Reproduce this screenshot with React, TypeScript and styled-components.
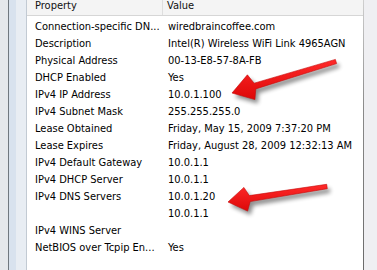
import React from "react";
import styled, { createGlobalStyle } from "styled-components";

const Global = createGlobalStyle`
  html, body { margin: 0; padding: 0; background: #ffffff; }
  body { width: 377px; height: 270px; overflow: hidden; }
`;

const Window = styled.div`
  position: relative;
  width: 377px;
  height: 270px;
  display: flex;
  overflow: hidden;
  font-family: "DejaVu Sans Condensed", "DejaVu Sans", sans-serif;
  font-size: 11px;
  color: #000;
`;

const LeftEdge = styled.div`
  display: flex;
  flex: none;
  height: 100%;
`;

const Strip = styled.div<{ $w: number; $bg: string }>`
  width: ${(p) => p.$w}px;
  background: ${(p) => p.$bg};
  flex: none;
`;

const ListView = styled.div`
  flex: 1;
  display: flex;
  flex-direction: column;
  background: #fff;
`;

const Header = styled.div`
  display: grid;
  grid-template-columns: 136px 1fr;
  height: 15px;
  background: #f4f4f4;
  border-bottom: 1px solid #d6d6d6;
  margin-bottom: 2px;
`;

const HeaderCell = styled.div<{ $pad: number; $divider?: boolean }>`
  padding-left: ${(p) => p.$pad}px;
  line-height: 12px;
  border-right: ${(p) => (p.$divider ? "1px solid #dedede" : "none")};
  color: #111;
`;

const Row = styled.div`
  display: grid;
  grid-template-columns: 137px 1fr;
  height: 17px;
  align-items: center;
  white-space: nowrap;
`;

const PropCell = styled.div`
  padding-left: 8px;
  overflow: hidden;
`;

const ValueCell = styled.div`
  padding-left: 4px;
`;

const RightEdge = styled.div`
  flex: none;
  width: 14px;
  display: flex;
  background: #efeff2;
`;

const RightLine = styled.div`
  width: 1px;
  background: linear-gradient(#cfcfcf, #8a8a8a 40%, #6a6a6a);
`;

const Overlay = styled.svg`
  position: absolute;
  left: 0;
  top: 0;
  pointer-events: none;
`;

const rows: [string, string][] = [
  ["Connection-specific DN...", "wiredbraincoffee.com"],
  ["Description", "Intel(R) Wireless WiFi Link 4965AGN"],
  ["Physical Address", "00-13-E8-57-8A-FB"],
  ["DHCP Enabled", "Yes"],
  ["IPv4 IP Address", "10.0.1.100"],
  ["IPv4 Subnet Mask", "255.255.255.0"],
  ["Lease Obtained", "Friday, May 15, 2009 7:37:20 PM"],
  ["Lease Expires", "Friday, August 28, 2009 12:32:13 AM"],
  ["IPv4 Default Gateway", "10.0.1.1"],
  ["IPv4 DHCP Server", "10.0.1.1"],
  ["IPv4 DNS Servers", "10.0.1.20"],
  ["", "10.0.1.1"],
  ["IPv4 WINS Server", ""],
  ["NetBIOS over Tcpip En...", "Yes"],
];

function arrowPoints(
  tip: [number, number],
  tail: [number, number],
  headLen: number,
  headHalf: number,
  shaftHead: number,
  shaftTail: number
): string {
  const dx = tail[0] - tip[0];
  const dy = tail[1] - tip[1];
  const len = Math.hypot(dx, dy);
  const ux = dx / len;
  const uy = dy / len;
  const nx = -uy;
  const ny = ux;
  const bx = tip[0] + ux * headLen;
  const by = tip[1] + uy * headLen;
  const pts: [number, number][] = [
    tip,
    [bx + nx * headHalf - ux * 4, by + ny * headHalf - uy * 4],
    [bx + nx * shaftHead, by + ny * shaftHead],
    [tail[0] + nx * shaftTail, tail[1] + ny * shaftTail],
    [tail[0] - nx * shaftTail, tail[1] - ny * shaftTail],
    [bx - nx * shaftHead, by - ny * shaftHead],
    [bx - nx * headHalf - ux * 4, by - ny * headHalf - uy * 4],
  ];
  return pts.map((p) => `${p[0].toFixed(1)},${p[1].toFixed(1)}`).join(" ");
}

const Arrow: React.FC<{ tip: [number, number]; tail: [number, number]; headLen: number; headHalf: number }> = ({
  tip,
  tail,
  headLen,
  headHalf,
}) => {
  const pts = arrowPoints(tip, tail, headLen, headHalf, 3, 2.2);
  return (
    <g>
      <polygon points={pts} fill="#000" opacity={0.45} transform="translate(3,4)" filter="url(#blur)" />
      <polygon points={pts} fill="url(#red)" stroke="#c40a0a" strokeWidth={0.6} strokeLinejoin="round" />
    </g>
  );
};

export default function App() {
  return (
    <>
      <Global />
      <Window>
        <LeftEdge>
          <Strip $w={8} $bg="#e5e8ec" />
          <Strip $w={1} $bg="#707880" />
          <Strip $w={7} $bg="#d8e2ee" />
          <Strip $w={10} $bg="#e8edf3" />
          <Strip $w={1} $bg="#c2cad3" />
        </LeftEdge>
        <ListView>
          <Header>
            <HeaderCell $pad={8} $divider>
              Property
            </HeaderCell>
            <HeaderCell $pad={4}>Value</HeaderCell>
          </Header>
          {rows.map(([p, v], i) => (
            <Row key={i}>
              <PropCell>{p}</PropCell>
              <ValueCell>{v}</ValueCell>
            </Row>
          ))}
        </ListView>
        <RightEdge>
          <RightLine />
        </RightEdge>
        <Overlay width={377} height={270} viewBox="0 0 377 270">
          <defs>
            <filter id="blur" x="-20%" y="-50%" width="140%" height="200%">
              <feGaussianBlur stdDeviation="2" />
            </filter>
            <linearGradient id="red" x1="0" y1="0" x2="0" y2="1">
              <stop offset="0" stopColor="#ff2a2a" />
              <stop offset="1" stopColor="#dd0808" />
            </linearGradient>
          </defs>
          <Arrow tip={[232, 93]} tail={[336, 61.5]} headLen={24} headHalf={13} />
          <Arrow tip={[228, 202]} tail={[327, 186.5]} headLen={22} headHalf={12} />
        </Overlay>
      </Window>
    </>
  );
}
